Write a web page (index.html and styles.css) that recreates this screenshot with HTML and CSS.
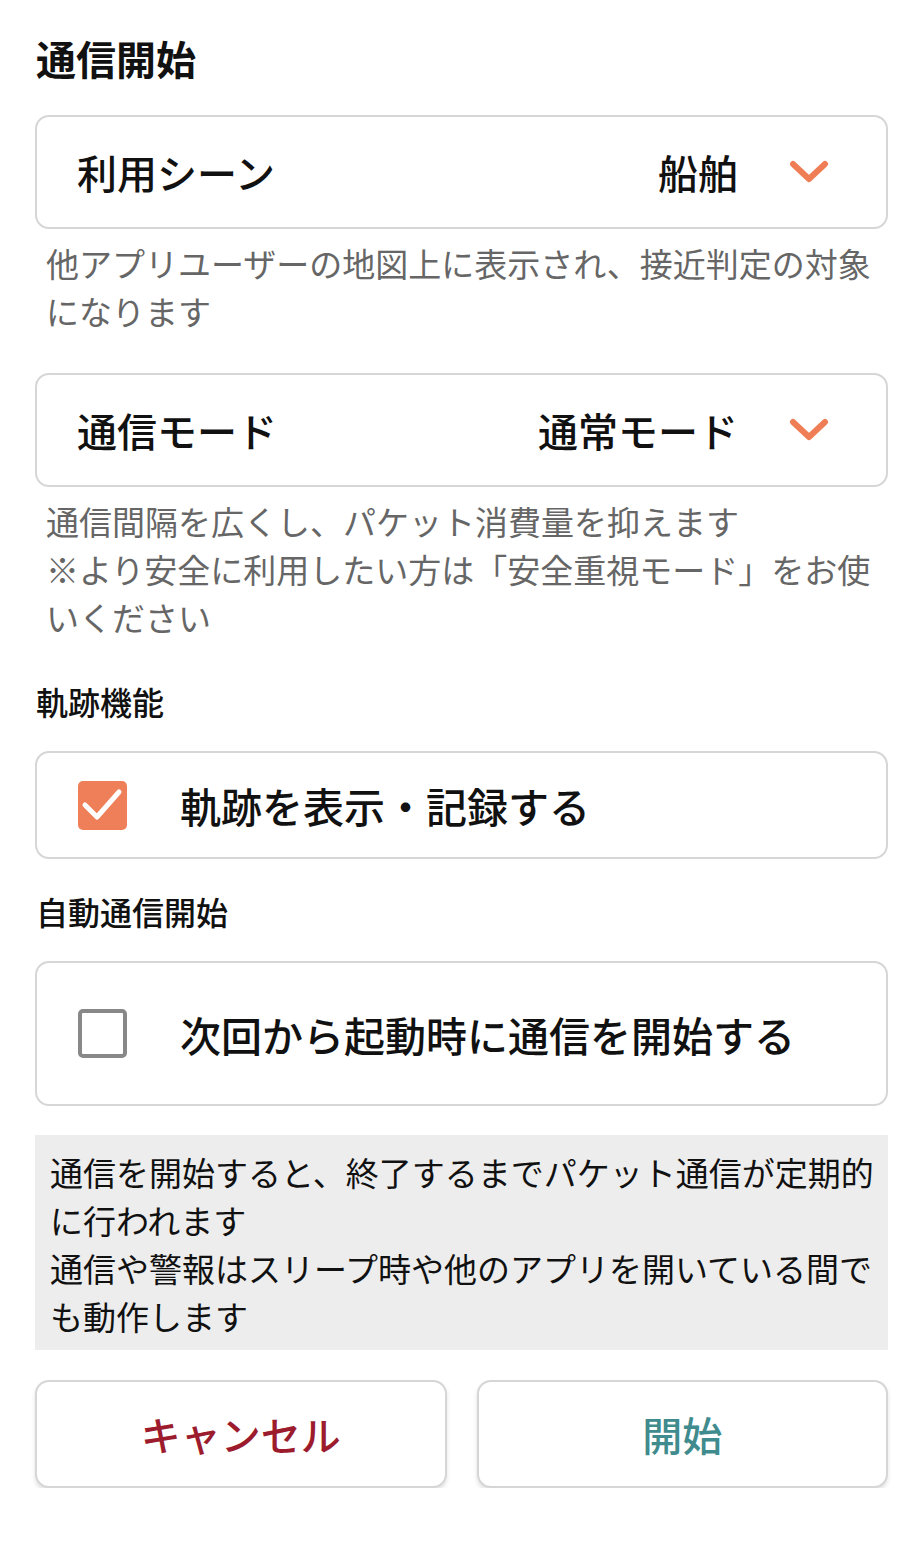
FILE: index.html
```html
<!DOCTYPE html>
<html lang="ja">
	<head>
		<meta charset="utf-8">
		<meta name="viewport" content="width=device-width, initial-scale=1.0">
		<title>通信開始</title>
		<link rel="stylesheet" href="styles.css">
	</head>
	<body>
		<h1 class="title">通信開始</h1>

		<div class="select">
			<span class="select-label">利用シーン</span>
			<span class="select-value">船舶</span>
			<svg class="chevron" viewBox="0 0 40 26"><path d="M4 5 L20 20 L36 5"/></svg>
		</div>
		<p class="note">他アプリユーザーの地図上に表示され、接近判定の対象<br>になります</p>

		<div class="select">
			<span class="select-label">通信モード</span>
			<span class="select-value">通常モード</span>
			<svg class="chevron" viewBox="0 0 40 26"><path d="M4 5 L20 20 L36 5"/></svg>
		</div>
		<p class="note">通信間隔を広くし、パケット消費量を抑えます<br>※より安全に利用したい方は「安全重視モード」をお使<br>いください</p>

		<h2 class="section">軌跡機能</h2>
		<div class="check-row">
			<span class="checkbox checked">
				<svg viewBox="0 0 49 49"><path d="M7 24 L19 36 L41 11"/></svg>
			</span>
			<span class="check-text">軌跡を表示・記録する</span>
		</div>

		<h2 class="section">自動通信開始</h2>
		<div class="check-row tall">
			<span class="checkbox"></span>
			<span class="check-text">次回から起動時に通信を開始する</span>
		</div>

		<div class="info">
			通信を開始すると、終了するまでパケット通信が定期的<br>に行われます<br>
			通信や警報はスリープ時や他のアプリを開いている間で<br>も動作します
		</div>

		<div class="buttons">
			<button type="button" class="btn cancel">キャンセル</button>
			<button type="button" class="btn start">開始</button>
		</div>
	</body>
</html>
```

FILE: styles.css
```css
body {
	margin: 0;
	padding: 0 35px;
	background-color: #ffffff;
	color: #111111;
	font-family: "Noto Sans CJK JP", "Noto Sans", sans-serif;
}

.title {
	margin: 29px 0 28px 1px;
	font-size: 40px;
	line-height: 58px;
	font-weight: 700;
}

.select {
	display: flex;
	align-items: center;
	height: 110px;
	padding: 0 57px 0 40px;
	border: 2px solid #d6d6d6;
	border-radius: 14px;
	font-size: 40px;
	font-weight: 500;
}

.select-label {
	flex: 1;
}

.select-value {
	margin-right: 51px;
}

.chevron {
	width: 40px;
	height: 26px;
	fill: none;
	stroke: #ef7d55;
	stroke-width: 6;
	stroke-linecap: round;
	stroke-linejoin: round;
}

.note {
	margin: 10px 0 38px 11px;
	font-size: 33px;
	line-height: 48px;
	color: #666666;
	white-space: nowrap;
}

.section {
	margin: 0 0 26px 1px;
	font-size: 32px;
	line-height: 48px;
	font-weight: 500;
}

.note + .section {
	margin-top: -2px;
}

.check-row {
	display: flex;
	align-items: center;
	height: 104px;
	padding-left: 41px;
	border: 2px solid #d6d6d6;
	border-radius: 14px;
	margin-bottom: 28px;
}

.check-row.tall {
	height: 141px;
	margin-bottom: 29px;
}

.checkbox {
	box-sizing: border-box;
	width: 49px;
	height: 49px;
	border: 4px solid #888888;
	border-radius: 5px;
	margin-right: 53px;
}

.checkbox.checked {
	border: none;
	background-color: #ef7f58;
}

.checkbox svg {
	display: block;
	width: 49px;
	height: 49px;
	fill: none;
	stroke: #ffffff;
	stroke-width: 5;
	stroke-linecap: round;
	stroke-linejoin: round;
}

.check-text {
	font-size: 41px;
	font-weight: 500;
}

.info {
	padding: 13px 0 10px 15px;
	background-color: #ededed;
	font-size: 33px;
	line-height: 48px;
	color: #111111;
	white-space: nowrap;
}

.buttons {
	display: flex;
	gap: 30px;
	margin-top: 30px;
}

.btn {
	flex: 1;
	height: 108px;
	border: 2px solid #d6d6d6;
	border-radius: 14px;
	background-color: #ffffff;
	box-shadow: 0 3px 4px rgba(0, 0, 0, 0.12);
	font-family: "Noto Sans CJK JP", sans-serif;
	font-size: 40px;
	font-weight: 500;
}

.cancel {
	color: #9c1c2e;
}

.start {
	color: #3f8b8d;
}
```
